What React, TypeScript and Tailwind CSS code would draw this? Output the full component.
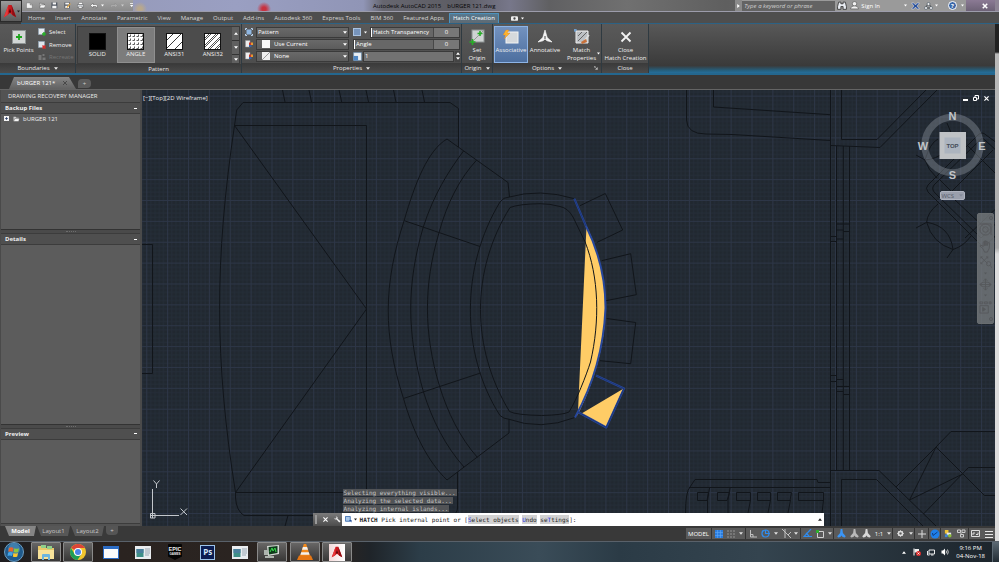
import { useState } from 'react';
import type { ReactNode } from 'react';

const ribbonTabs = [
  'Home', 'Insert', 'Annotate', 'Parametric', 'View', 'Manage', 'Output', 'Add-ins',
  'Autodesk 360', 'Express Tools', 'BIM 360', 'Featured Apps', 'Hatch Creation',
];

const patterns = ['SOLID', 'ANGLE', 'ANSI31', 'ANSI32'] as const;

function Caret({ className = '' }: { className?: string }) {
  return (
    <svg viewBox="0 0 6 4" className={`w-1 h-[3px] shrink-0 ${className}`} fill="currentColor" aria-hidden="true">
      <path d="M0 0h6L3 4z" />
    </svg>
  );
}

function LogoA({ className }: { className: string }) {
  return (
    <svg viewBox="0 0 16 16" className={className} aria-hidden="true">
      <path d="M6.2 1h3.6L15 15l-4.3-2.4L8 10.4l-2.700 2.200L1 15z" fill="#c9191e" />
      <path d="M6.200 1L5.300 12.600 1 15z" fill="#e8383a" />
      <path d="M9.800 1L15 15l-4.300-2.400z" fill="#8f0d12" />
      <path d="M8 5.200l1.500 4-1.500 1.200-1.500-1.200z" fill="#5d0609" />
    </svg>
  );
}

/* ---------- title bar ---------- */

function QuickAccess() {
  return (
    <div className="flex h-full w-28 shrink-0 items-center gap-[6px] bg-gradient-to-b from-[#a2a2a2] to-[#8b8b8b] pl-[5px] text-white">
      <button aria-label="New" className="h-2 w-2">
        <svg viewBox="0 0 16 16"><path d="M1 2h9l5 5v8H1z" fill="#f4f4f4" stroke="#555" /><path d="M10 2v5h5" fill="#bbb" stroke="#555" /></svg>
      </button>
      <button aria-label="Open" className="h-2 w-2">
        <svg viewBox="0 0 16 16"><path d="M1 14V3h5l2 2h5v3" fill="#ddd" stroke="#444" /><path d="M1 14l3-7h12l-3 7z" fill="#f7f7f7" stroke="#444" /></svg>
      </button>
      <button aria-label="Save" className="h-2 w-2">
        <svg viewBox="0 0 16 16"><path d="M1 1h14v14H1z" fill="#4e5560" /><path d="M4 1h8v5H4zM3 9h10v6H3z" fill="#f5f5f5" /></svg>
      </button>
      <button aria-label="Save as" className="h-2 w-2">
        <svg viewBox="0 0 16 16"><path d="M1 1h13v14H1z" fill="#4e5560" /><path d="M3 2h9v4H3zM3 9h9v5H3z" fill="#f5f5f5" /><path d="M7 11l7-8 2 2-7 8-3 1z" fill="#e0a33a" /></svg>
      </button>
      <button aria-label="Plot" className="h-2 w-2">
        <svg viewBox="0 0 16 16"><path d="M4 1h9v5H4z" fill="#fff" stroke="#555" /><path d="M1 6h14v7H1z" fill="#dfe3e8" stroke="#444" /><path d="M4 10h8v5H4z" fill="#fff" stroke="#444" /></svg>
      </button>
      <button aria-label="Undo" className="flex h-2 items-center gap-[3px]">
        <svg viewBox="0 0 16 16" className="h-2 w-2"><path d="M6 2L1 7l5 5V9h5c2 0 2 2 1 4 4-3 4-8-1-8H6z" fill="#f5f5f5" stroke="#555" /></svg>
        <Caret className="w-[3px]" />
      </button>
      <button aria-label="Redo" className="flex h-2 items-center gap-[3px] text-[#ccc]">
        <svg viewBox="0 0 16 16" className="h-2 w-2"><path d="M10 2l5 5-5 5V9H5c-2 0-2 2-1 4-4-3-4-8 1-8h5z" fill="#aaa" stroke="#8a8a8a" /></svg>
        <Caret className="w-[3px]" />
      </button>
      <button aria-label="Customize toolbar" className="h-2 w-1">
        <svg viewBox="0 0 8 16"><path d="M0 3h8v2H0zM0 7h8l-4 5z" fill="#fff" /></svg>
      </button>
    </div>
  );
}

function TitleBar() {
  return (
    <div className="flex h-3 items-stretch overflow-hidden border-b border-[#9c9cab] bg-[radial-gradient(circle_at_243px_9px,#c8323f_2px,#c8323f00_7px),radial-gradient(circle_at_119px_9px,#b9a88c_2px,#b9a88c00_7px),linear-gradient(90deg,#9397b4_0%,#9a9fc2_22%,#9095b6_35%,#66666f_37%,#5c5c63_45%,#77778a_50%,#606062_54%,#707070_62%,#5f5f5f_72%,#707070_100%)]">
      <QuickAccess />
      <div className="flex-1 basis-0" />
      <div className="flex shrink-0 items-center gap-[6px] whitespace-pre text-[#060607]">
        <span>Autodesk AutoCAD 2015</span>
        <span>bURGER 121.dwg</span>
      </div>
      <div className="flex-1 basis-0" />
      <div className="flex shrink-0 items-center bg-[#9a9a9a] text-white">
        <button aria-label="Collapse search" className="flex h-full w-[7px] items-center justify-center bg-[#8a8a8a]">
          <svg viewBox="0 0 4 6" className="h-1 w-[3px]"><path d="M0 0l4 3-4 3z" fill="#fff" /></svg>
        </button>
        <input
          aria-label="Search"
          placeholder="Type a keyword or phrase"
          className="h-[10px] w-[93px] bg-[#636363] px-[2px] italic text-white outline-none placeholder:text-[#d0d0d0]"
        />
        <button aria-label="Find" className="ml-[2px] h-[9px] w-[10px]">
          <svg viewBox="0 0 18 16"><path d="M3 2h4v3h4V2h4l2 8v5h-6v-5H7v5H1v-5z" fill="#e8ecf2" stroke="#333" strokeWidth="1.500" /></svg>
        </button>
        <button className="ml-[3px] flex items-center gap-[2px]">
          <svg viewBox="0 0 16 16" className="h-[9px] w-[9px]"><circle cx="8" cy="5" r="4" fill="#f2f2f2" stroke="#444" /><path d="M1 14c0-4 4-5 7-5s7 1 7 5z" fill="#f2f2f2" stroke="#444" /></svg>
          Sign In
        </button>
        <Caret className="ml-6 w-[3px]" />
        <button aria-label="Exchange" className="ml-1 h-2 w-[9px]">
          <svg viewBox="0 0 18 16"><path d="M1 2h5l3 4 3-4h5l-5 6 5 6h-5l-3-4-3 4H1l5-6z" fill="#254f9c" stroke="#e4e4ee" /></svg>
        </button>
        <button aria-label="Stay connected" className="ml-1 flex items-center gap-[2px]">
          <svg viewBox="0 0 18 16" className="h-2 w-[9px]"><path d="M9 2l6 10H3z" fill="none" stroke="#444" strokeWidth="2" /><circle cx="9" cy="4" r="3" fill="#eee" stroke="#345" /><circle cx="4" cy="12" r="3" fill="#eee" stroke="#345" /><circle cx="14" cy="12" r="3" fill="#eee" stroke="#345" /></svg>
          <Caret className="w-[3px]" />
        </button>
        <button aria-label="Help" className="ml-[10px] flex items-center gap-1 pr-[2px]">
          <span className="flex h-[9px] w-[9px] items-center justify-center rounded-full border border-white bg-[#3b67a8] font-bold leading-none">?</span>
          <Caret className="w-[3px]" />
        </button>
      </div>
      <button aria-label="Close window" className="flex w-[29px] shrink-0 items-center justify-center bg-gradient-to-b from-[#8b7a94] to-[#6d6276] pl-2">
        <svg viewBox="0 0 8 8" className="h-[6px] w-[6px]"><path d="M1 1l6 6M7 1L1 7" stroke="#fff" strokeWidth="2" /></svg>
      </button>
      <div className="w-1 bg-[#8d8494]" />
    </div>
  );
}

function RibbonTabs() {
  const [active, setActive] = useState('Hatch Creation');
  return (
    <div role="tablist" className="flex h-3 items-end border-b border-[#2c6285] bg-[#4e4e4e] pl-[2px]">
      {ribbonTabs.map((t) => (
        <button
          key={t}
          role="tab"
          aria-selected={t === active}
          onClick={() => setActive(t)}
          className={`h-[10px] whitespace-nowrap leading-[9px] ${
            t === active
              ? 'rounded-t-[1px] border-x border-t border-[#4d92bd] bg-gradient-to-b from-[#56788f] to-[#5f6a72] px-[3px] text-white'
              : 'px-[5px] text-[#d8d8d8]'
          }`}
        >
          {t}
        </button>
      ))}
      <button aria-label="Ribbon display" className="ml-3 flex h-[10px] items-center gap-[3px] text-white">
        <svg viewBox="0 0 12 8" className="h-[5px] w-[7px]"><rect width="12" height="8" rx="2" fill="#eee" /><circle cx="6" cy="4" r="2" fill="#444" /></svg>
        <Caret className="w-[3px]" />
      </button>
    </div>
  );
}

/* ---------- ribbon ---------- */

function Panel({ title, caret, launcher, className, children }: {
  title: string; caret?: boolean; launcher?: boolean; className: string; children: ReactNode;
}) {
  return (
    <section className={`flex shrink-0 flex-col border-r border-[#2f3a41] bg-gradient-to-b from-[#595959] to-[#4a4a4a] ${className}`}>
      <div className="flex flex-1 items-start px-px pt-[2px]">{children}</div>
      <div className="relative flex h-[10px] items-center justify-center gap-1 bg-gradient-to-b from-[#3a3a3a] to-[#4b4b4b] text-[#e8e8e8]">
        {title}
        {caret && <Caret />}
        {launcher && (
          <svg viewBox="0 0 6 6" className="absolute right-[3px] h-1 w-1"><path d="M0 0h3M0 0v3M2 2l3 3M5 2v3H2" stroke="#ddd" fill="none" /></svg>
        )}
      </div>
    </section>
  );
}

function Swatch({ kind }: { kind: (typeof patterns)[number] }) {
  return (
    <svg viewBox="0 0 17 17" className="h-[17px] w-[17px]" aria-hidden="true">
      <rect width="17" height="17" fill={kind === 'SOLID' ? '#000' : '#fff'} />
      {kind === 'ANGLE' && (
        <path
          d="M1.500 3.500h2v-2M5.500 3.500h2v-2M9.500 3.500h2v-2M13.500 3.500h2v-2M1.500 7.500h2v-2M5.500 7.500h2v-2M9.500 7.500h2v-2M13.500 7.500h2v-2M1.500 11.500h2v-2M5.500 11.500h2v-2M9.500 11.500h2v-2M13.500 11.500h2v-2M1.500 15.500h2v-2M5.500 15.500h2v-2M9.500 15.500h2v-2M13.500 15.500h2v-2"
          stroke="#333" strokeWidth=".8" fill="none"
        />
      )}
      {kind === 'ANSI31' && <path d="M0 8L8 0M0 16L16 0M8 17l9-9" stroke="#222" strokeWidth=".9" />}
      {kind === 'ANSI32' && <path d="M0 6l6-6M0 8l8-8M0 13L13 0M0 15L15 0M3 17L17 3M5 17L17 5M10 17l7-7M12 17l5-5" stroke="#222" strokeWidth=".8" />}
      <rect x=".5" y=".5" width="16" height="16" fill="none" stroke="#111" />
    </svg>
  );
}

function BigButton({ label, icon, active, className }: { label: string[]; icon: ReactNode; active?: boolean; className: string }) {
  return (
    <button
      className={`flex h-[37px] shrink-0 flex-col items-center pt-[2px] leading-[8px] text-[#f0f0f0] ${className} ${
        active ? 'border border-[#8db4e6] bg-gradient-to-b from-[#7392bf] to-[#4d6f9f]' : 'border border-transparent'
      }`}
    >
      <span className="mb-px flex h-4 items-center">{icon}</span>
      {label.map((l) => <span key={l} className="whitespace-nowrap">{l}</span>)}
    </button>
  );
}

function SmallIcon({ color }: { color: string }) {
  return (
    <svg viewBox="0 0 16 16" className="h-2 w-2 shrink-0" aria-hidden="true">
      <rect x="1" y="1" width="12" height="12" fill="#dfe5ec" stroke="#8fa7bd" />
      <path d="M9 9l6 6M15 9l-6 6" stroke={color} strokeWidth="3" />
    </svg>
  );
}

function Boundaries() {
  return (
    <Panel title="Boundaries" caret className="w-[76px]">
      <BigButton
        className="w-[35px]"
        label={['Pick Points']}
        icon={
          <svg viewBox="0 0 14 14" className="h-[14px] w-[14px]"><rect x=".5" y=".5" width="13" height="13" fill="#d3d7d6" stroke="#8e9494" /><path d="M7 4v6M4 7h6" stroke="#1ca51c" strokeWidth="1.800" /></svg>
        }
      />
      <div className="flex flex-col pl-[2px] text-[#f0f0f0]">
        <button className="flex h-3 items-center gap-[3px]">
          <svg viewBox="0 0 16 16" className="h-2 w-2"><rect x="1" y="1" width="12" height="12" fill="#e6ebf0" stroke="#8fa7bd" /><path d="M12 8v8M8 12h8" stroke="#27ad27" strokeWidth="3" /></svg>
          Select
        </button>
        <button className="flex h-[13px] items-center gap-[3px]"><SmallIcon color="#dd2b2b" />Remove</button>
        <button disabled className="flex h-3 items-center gap-[3px] text-[#757575]">
          <svg viewBox="0 0 16 16" className="h-2 w-2"><path d="M1 4h6v10H1zM9 2h4v4H9zM9 9h6v5H9z" fill="#777" /></svg>
          Recreate
        </button>
      </div>
    </Panel>
  );
}

function PatternPanel() {
  const [selected, setSelected] = useState<string>('ANGLE');
  return (
    <Panel title="Pattern" className="w-[166px]">
      <div className="flex flex-1 border border-[#3b3b3b] bg-[#4c4c4c]">
        {patterns.map((p) => (
          <button
            key={p}
            onClick={() => setSelected(p)}
            className={`flex h-9 flex-1 flex-col items-center border pt-[5px] leading-[8px] text-[#f0f0f0] ${
              p === selected ? 'border-[#8f8f8f] bg-[#7c7c7c]' : 'border-transparent'
            }`}
          >
            <Swatch kind={p} />
            {p}
          </button>
        ))}
        <div className="flex w-[7px] flex-col gap-px bg-[#333]">
          {['Scroll up', 'Scroll down', 'More patterns'].map((l, i) => (
            <button key={l} aria-label={l} className={`flex items-center justify-center bg-[#606060] text-white ${i === 2 ? 'h-2' : 'flex-1'}`}>
              <Caret className={i === 0 ? 'rotate-180' : ''} />
            </button>
          ))}
        </div>
      </div>
    </Panel>
  );
}

function PropSelect({ label, value, swatch, icon }: { label: string; value: string; swatch?: ReactNode; icon: ReactNode }) {
  return (
    <div className="flex h-3 items-center gap-[3px]">
      {icon}
      <span className="relative flex h-[11px] flex-1 items-center bg-gradient-to-b from-[#6b6b6b] to-[#5a5a5a] pl-[2px] text-white outline outline-1 -outline-offset-1 outline-[#3a3a3a]">
        {swatch}
        <select aria-label={label} className="h-[11px] w-full appearance-none bg-transparent leading-[11px] outline-none" defaultValue={value}>
          <option>{value}</option>
        </select>
        <Caret className="pointer-events-none absolute right-[2px]" />
      </span>
    </div>
  );
}

function NumberSlider({ label, id }: { label: string; id: string }) {
  return (
    <div className="flex h-[11px] flex-1 items-stretch border border-[#3a3a3a] bg-[#676767] leading-[9px] text-white">
      <label htmlFor={id} className="flex-1 whitespace-nowrap border-l border-white pl-px">{label}</label>
      <input id={id} defaultValue="0" className="w-[26px] border-l border-[#484848] bg-[#777] text-center outline-none" />
    </div>
  );
}

function ColorIcon() {
  return (
    <svg viewBox="0 0 16 16" className="h-2 w-2 shrink-0" aria-hidden="true">
      <path d="M1 1h9v13H1z" fill="#eee" stroke="#999" /><path d="M8 5h4v5H8z" fill="#c8362b" /><path d="M12 5h4v5h-4z" fill="#e59a32" /><path d="M8 10h5v4H8z" fill="#3463a8" />
    </svg>
  );
}

function Properties() {
  return (
    <Panel title="Properties" caret className="w-[220px]">
      <div className="flex w-[106px] flex-col pl-[2px]">
        <PropSelect
          label="Hatch type"
          value="Pattern"
          icon={<svg viewBox="0 0 16 16" className="h-2 w-2 shrink-0"><rect x="3" y="3" width="10" height="10" fill="#8fb6e0" /><path d="M1 1h3M1 1v3M15 1h-3M15 1v3M1 15h3M1 15v-3M15 15h-3M15 15v-3" stroke="#bcd5ef" strokeWidth="2" /></svg>}
        />
        <PropSelect label="Hatch color" value="Use Current" icon={<ColorIcon />} swatch={<span className="mx-1 h-2 w-2 shrink-0 bg-[#f7f7f7]" />} />
        <PropSelect
          label="Background color"
          value="None"
          icon={<ColorIcon />}
          swatch={<svg viewBox="0 0 8 8" className="mx-1 h-2 w-2 shrink-0"><path d="M0 0h8v8H0z" fill="#eee" /><path d="M0 8l8-8" stroke="#999" /></svg>}
        />
      </div>
      <div className="ml-1 flex flex-1 flex-col">
        <div className="flex h-3 items-center gap-[3px]">
          <svg viewBox="0 0 8 8" className="h-2 w-2 shrink-0"><rect x=".5" y=".5" width="7" height="7" fill="#7794bb" stroke="#a9c2e0" /></svg>
          <Caret className="w-[3px] text-white" />
          <NumberSlider id="transparency" label="Hatch Transparency" />
        </div>
        <div className="flex h-3 items-center"><NumberSlider id="angle" label="Angle" /></div>
        <div className="flex h-3 items-center gap-px">
          <svg viewBox="0 0 16 16" className="h-[9px] w-[9px] shrink-0"><path d="M1 1h14v14H1z" fill="#e9eef4" stroke="#6890ba" /><path d="M1 7h8v8H1z" fill="#4f87c4" /></svg>
          <input aria-label="Hatch pattern scale" defaultValue="1" className="h-[11px] min-w-0 flex-1 border border-[#3a3a3a] bg-[#727272] px-px text-white outline-none" />
          <span className="flex h-[11px] w-[5px] flex-col items-center justify-around bg-[#444] text-white">
            <Caret className="rotate-180" /><Caret />
          </span>
        </div>
      </div>
    </Panel>
  );
}

function Ribbon() {
  return (
    <div className="flex h-[51px] border-b-2 border-[#24678f] bg-[linear-gradient(180deg,#585858_0%,#3a3a3a_85%,#25607f_95%,#256e9b_100%)]">
      <Boundaries />
      <PatternPanel />
      <Properties />
      <Panel title="Origin" caret className="w-[31px]">
        <BigButton
          className="w-7"
          label={['Set', 'Origin']}
          icon={<svg viewBox="0 0 16 16" className="h-4 w-4"><rect x="3" y="1" width="12" height="12" fill="#cfd3d3" stroke="#8e9494" /><path d="M3 13L15 1" stroke="#999" /><path d="M11 2v5M8.500 4.500h5M3.500 10v6M.5 13h6" stroke="#25ad25" strokeWidth="1.600" /></svg>}
        />
      </Panel>
      <Panel title="Options" caret launcher className="w-[109px]">
        <BigButton
          active
          className="w-[34px]"
          label={['Associative']}
          icon={<svg viewBox="0 0 16 16" className="h-4 w-4"><rect x="3" y="3" width="12" height="11" fill="#d6d9dc" stroke="#f3f3f3" /><path d="M3 1L0 6h3L1 10l6-6H4l2-3z" fill="#ffb52a" stroke="#d9822b" strokeWidth=".4" /></svg>}
        />
        <BigButton
          className="w-[34px]"
          label={['Annotative']}
          icon={<svg viewBox="0 0 16 16" className="h-4 w-4"><path d="M8 1l2.200 7.500L15 13l-5-1.200L8 10l-2 1.800L1 13l4.800-4.500z" fill="#f3f3f3" stroke="#fff" strokeWidth=".6" /><path d="M8 7v3" stroke="#444" /></svg>}
        />
        <div className="relative">
          <BigButton
            className="w-[39px]"
            label={['Match', 'Properties']}
            icon={<svg viewBox="0 0 16 16" className="h-4 w-4"><path d="M2 2h12v12H2z" fill="#bcc0c4" stroke="#eee" /><path d="M4 12L13 3M4 7l4-4" stroke="#666" /><path d="M0 1h3M1 0v3" stroke="#7bb4ee" /><path d="M15 6l-4 5" stroke="#ddd" strokeWidth="1.500" /><path d="M12 10l-5 3 1 2 5-2z" fill="#c8713a" /></svg>}
          />
          <Caret className="absolute bottom-2 right-px w-[3px] text-white" />
        </div>
      </Panel>
      <Panel title="Close" className="w-[47px]">
        <BigButton
          className="w-[45px]"
          label={['Close', 'Hatch Creation']}
          icon={<svg viewBox="0 0 12 12" className="h-3 w-3"><path d="M1.500 1.500l9 9M10.500 1.500l-9 9" stroke="#f2f2f2" strokeWidth="1.800" /></svg>}
        />
      </Panel>
    </div>
  );
}

function FileTabs() {
  return (
    <div className="flex h-[15px] shrink-0 items-end border-b border-[#646464] bg-[#383838] pl-[9px]">
      <button className="flex h-3 w-[67px] items-center justify-between bg-gradient-to-b from-[#858585] to-[#626262] px-2 text-white [clip-path:polygon(0_100%,5px_0,60px_0,100%_100%)]">
        bURGER 121*
        <svg viewBox="0 0 6 6" className="mr-px h-1 w-1"><path d="M0 0l6 6M6 0L0 6" stroke="#333" /></svg>
      </button>
      <button aria-label="New tab" className="mb-px ml-[2px] flex h-[9px] w-[13px] items-center justify-center rounded-t-[4px] rounded-br-[4px] bg-[#5b5b5b] text-[#ccc]">+</button>
    </div>
  );
}

/* ---------- left palette ---------- */

function PaletteSection({ title, className = '', children }: { title: string; className?: string; children?: ReactNode }) {
  return (
    <section className={`flex flex-col ${className}`}>
      <h2 className="flex h-3 shrink-0 items-center justify-between border-y border-[#3c3c3c] bg-[#4f4f4f] pl-1 pr-[3px] font-bold text-[#f0f0f0]">
        {title}
        <span className="h-px w-[3px] bg-white" />
      </h2>
      <div className="flex-1 bg-[#5c5c5c]">{children}</div>
    </section>
  );
}

function Splitter() {
  return (
    <div className="flex h-1 shrink-0 items-center justify-center border-t border-[#333] bg-[#4a4a4a]">
      <span className="w-[10px] border-t border-dotted border-[#6d6d6d]" />
    </div>
  );
}

function RecoveryManager() {
  return (
    <aside className="flex w-[142px] shrink-0 flex-col border-l border-r-2 border-[#4a4a4a] bg-[#535353]">
      <h1 className="h-3 shrink-0 pl-[7px] leading-[13px] text-[#e8e8e8]">DRAWING RECOVERY MANAGER</h1>
      <PaletteSection title="Backup Files" className="h-[127px] shrink-0">
        <button className="flex h-2 items-center pl-[3px] pt-px text-[#ededed]">
          <svg viewBox="0 0 10 10" className="mr-1 h-[5px] w-[5px]"><path d="M0 0h10v10H0z" fill="#f3f3f3" /><path d="M5 2v6M2 5h6" stroke="#1d2f5c" strokeWidth="1.400" /></svg>
          <svg viewBox="0 0 16 14" className="mr-[3px] h-[6px] w-[7px]"><path d="M1 12V2h5l2 2h5v3" fill="#ccc" /><path d="M1 13l3-7h11l-2 7z" fill="#f5f5f5" stroke="#444" /></svg>
          bURGER 121
        </button>
      </PaletteSection>
      <Splitter />
      <PaletteSection title="Details" className="flex-[2]" />
      <Splitter />
      <PaletteSection title="Preview" className="flex-1" />
      <div className="h-[3px] border-t border-[#3c3c3c]" />
    </aside>
  );
}

/* ---------- drawing area ---------- */

const wallDetails =
  'M836.5 224H849.5M836.5 230H843.3M843.3 231.500H849.5M830.5 236.500H836.5M830.5 241.500H836.5M836.5 239H843.3M830.5 375.500H836.5M830.5 381.500H836.5M836.5 379.500H843.3M836.5 386.500H849.5M836.5 391.500H843.3M843.3 394.500H849.5';

function Drawing() {
  return (
    <svg className="absolute inset-0 h-full w-full" aria-label="Model space drawing">
      <defs>
        <pattern id="grid" width="20.870" height="20.870" patternUnits="userSpaceOnUse" x="188" y="200">
          <path d="M4.700 0V21M8.850 0V21M13 0V21M17.200 0V21M0 4.700H21M0 8.850H21M0 13H21M0 17.200H21" stroke="#252d38" strokeWidth=".9" />
          <path d="M.5 0V21M0 .5H21" stroke="#2d3647" />
        </pattern>
      </defs>
      <g transform="translate(-142 -90)">
        <rect x="141" y="90" width="2400" height="1600" fill="url(#grid)" />

        {/* selected hatch area */}
        <path d="M586.500 226C600 253 605.500 282 605.500 308C605.500 343 594 384 577 416L578 411.500z" fill="#ffcc66" />
        <path d="M581.500 413.500L623.300 388.700L606 426.700z" fill="#ffcc66" />

        <g fill="none" stroke="#11151a" strokeWidth="1">
          {/* desk */}
          <path d="M458.500 147V108.500L450 102.500H243L236.700 110L234.500 125.500C214.500 260 214.500 360 235.500 492.500V498Q236.500 511 244 515.500H452Q457.500 513 457.500 508V472" />
          <path d="M234.500 125.500H366.500V492.500H235.500M234.500 125.500L366.500 309L235.500 492.500" />
          <path d="M282.500 90L285 102M309 90L311.500 102M339 90L341.700 102M366 90L368.500 102M393.500 90L396 102M422 90L424.500 102M288 515.500L285 526" />
          <path d="M141 244.500H152.500V373.500H141" />

          {/* curved sofa */}
          <path d="M447 139C428 150 415 183 404.300 220C383 285 383 335 403.500 398.500C413 432 428 462 447 480L509 433V419M447 139L508 182.500L509.500 197" />
          <path d="M463.500 151C448 172 434 194 423.300 227C406.500 284 406.500 334 423.500 392C432 420 446 447 464 467" />
          <path d="M476.700 160C460 178 447 203 439 232.700C423.500 285 423.500 333 439.500 386C447 411 460 438 477.500 457.500" />
          <path d="M404.300 220.700L480 246.500M403.500 398.500L480.500 373" />

          {/* table */}
          <path d="M574.300 198.700Q540 188 508 197.300Q504 197 500 202C461 266 460 353 500 415.500Q504 419 508 419Q541 431 574.300 417.700" />
          <path d="M540 203.700Q519 204 510 207.500C470.500 271 471 348 509.500 411.500Q516 415 541.700 415.500Q563 415 569 412C577 399 586 376 590.500 362C600 321 599 277 585 241.700L573 217Q568 208 560 206.500Q550 203.700 540 203.700z" />

          {/* stools */}
          <path d="M580 205.700L605.300 193.500L622.700 230L596.700 242.500M601.700 260.700L630.700 253.700L636.300 294.700L606 300.700M606.700 318.500L635.700 322.500L630.700 363.700L600 360.700" />

          {/* wall and window */}
          <path d="M686.500 90V120Q687 134 706 134L732 134.500L830.500 140.500M713.500 90V107L830.500 114.700" />
          <path d="M830.500 90V526M841.500 90V139.500H877L926 90M830.500 145.500L880 147.500L937 90" />
          <path d="M836.500 146V470.500M843.300 146V470.500M849.500 146V470.500" />
          <path d={wallDetails} />
          <path d="M830.500 470.500H879L936 526M841.500 526V479.500H876.500L923 526" />

          {/* counter */}
          <path d="M685.500 513Q685.500 492 690 487L695 479.500H817L818 482.500H830.500M689 487.500H830.500" />
          <path d="M697.500 492.500H708.500L707 500.500H697.500zM717.500 492.500H729.500L727 500.500H717.500zM736.500 492.500H750.500V500.500H736.500zM757.500 492.500H770.500V500.500H757.500zM777.500 492.500H791.500L790 500.500H777.500zM798.500 492.500H823.500V500.500H798.500z" />
          <path d="M709.500 488L707.500 500V513M730 488L728 500V513M750.500 500L748 513M770.500 500L768 513M790.500 500L788 513M823.500 500L822 513" />

          {/* lower right furniture */}
          <path d="M896 487L936 447L951 431.500H1600M936 447L984.500 495.500H1600M936 447L909.500 500L962.700 474M923.500 514L968.500 467.500H1600" />

          {/* upper right furniture */}
          <path d="M1012 154L986 135Q982 131 978 135L928 185Q925 188 928 192L980 244Q983 248 987 244L1012 220" />
          <path d="M1012 165L985 140Q982 137 979 141L934 185Q931 189 935 193L981 238L1012 208" />
          <path d="M940 180L951.500 191.500L993 150M955 200L1000 242M968 146L1006 184M1002 203L965 238" />
          <path d="M938 204Q927 213 926.700 222.300Q932 243 953 249.500Q950 226 926.700 222.300L916 228M953 249.500L947 258M953 249.500Q964 246 971 236" />
          <path d="M916 155L925 160Q930 143 938 139M925 160Q928 170 937 178M925 160Q948 158 952 135L947 123" />
        </g>

        {/* selected edges */}
        <g fill="none" strokeLinejoin="round">
          <path d="M574.300 198.700L586 226Q605.500 265 605.500 308Q603 367 575 417.500" stroke="#27479c" strokeWidth="2" />
          <path d="M596 375.500L624 388.500L606.300 427.500L578 412" stroke="#27479c" strokeWidth="2" />
          <path d="M574.300 198.700L586 226M596 375.500L624 388.500L606.300 427.500L578 412" stroke="#172b60" strokeWidth=".6" />
        </g>

        {/* UCS icon */}
        <path d="M152.500 489V518M150 515.500H179M150.500 513.500h4.500v4.500h-4.500z" fill="none" stroke="#c3c7cc" />
        <path d="M153.500 480.500L156.500 484L159.500 480.500M156.500 484V488M180.500 508.500L187 515M187 508.500L180.500 515" fill="none" stroke="#c3c7cc" />
      </g>
    </svg>
  );
}

function ViewCube() {
  return (
    <div className="absolute right-[7px] top-[18px] flex w-[72px] flex-col items-center gap-[7px]">
      <svg viewBox="0 0 72 76" className="h-[76px] w-[72px]" fontFamily="'Liberation Sans', sans-serif" fontWeight="bold" textAnchor="middle">
        <circle cx="36.500" cy="37" r="27.700" fill="none" stroke="#8d949e" strokeOpacity=".42" strokeWidth="7" />
        <rect x="23.500" y="24" width="26.500" height="27" fill="#bfc2c5" />
        <rect x="28.500" y="29.500" width="16" height="16" fill="#acb4bf" />
        <text x="36.500" y="39.500" fontSize="6" fill="#454c57">TOP</text>
        <g fontSize="11" fill="#c2c5c9">
          <text x="36.500" y="12">N</text>
          <text x="36.500" y="71">S</text>
          <text x="7" y="41.500">W</text>
          <text x="66" y="41.500">E</text>
        </g>
      </svg>
      <button className="flex h-[9px] w-[25px] items-center justify-between rounded-[2px] border border-[#aeb3bf] bg-[#9a9fac] px-px leading-none text-[#555c6a]">
        WCS
        <Caret className="text-[#858b9a]" />
      </button>
    </div>
  );
}

function NavBar() {
  return (
    <div className="absolute right-px top-[123px] flex h-[111px] w-[17px] flex-col items-center justify-between rounded-[2px] border border-[#696d70] bg-[#7b7f82]/75 py-[2px] text-[#56595c]">
      <svg viewBox="0 0 4 4" className="h-1 w-1 self-end"><circle cx="2" cy="2" r="1.500" fill="none" stroke="currentColor" /></svg>
      <button aria-label="Full navigation wheel"><svg viewBox="0 0 14 14" className="h-[13px] w-[13px]" fill="none" stroke="currentColor"><circle cx="7" cy="7" r="6" /><circle cx="7" cy="7" r="3" /><path d="M1 1h12v12" /></svg></button>
      <button aria-label="Pan"><svg viewBox="0 0 14 14" className="h-[13px] w-[13px]" fill="none" stroke="currentColor"><path d="M4 9L1 6.500 2 5.500 4.500 7V2h1.500v4V1h1.500v5V1.500H9V6l1-3.500 1.500.5L11 9l-2 4H6z" /></svg></button>
      <button aria-label="Zoom"><svg viewBox="0 0 14 14" className="h-3 w-3" fill="none" stroke="currentColor"><path d="M1 1l8 8M9 1L1 9M1 3V1h2M7 1h2v2M1 7v2h2" /><circle cx="10" cy="9" r="2.500" /><path d="M12 11l2 3" /></svg></button>
      <Caret className="w-[3px]" />
      <button aria-label="Orbit"><svg viewBox="0 0 14 14" className="h-[13px] w-[13px]" fill="none" stroke="currentColor"><path d="M7 1v12M5 3l2-2 2 2M5 11l2 2 2-2M1 7h12M3 5L1 7l2 2M11 5l2 2-2 2" /><ellipse cx="7" cy="7" rx="5" ry="2.500" /></svg></button>
      <Caret className="w-[3px]" />
      <button aria-label="Show motion"><svg viewBox="0 0 14 14" className="h-[13px] w-[13px]" fill="none" stroke="currentColor"><path d="M1 1h3v2H1zM6 1h3v2H6zM11 1h2v2h-2zM1 5h9v8H1z" /><path d="M4 7l3 2-3 2z" fill="currentColor" /></svg></button>
      <svg viewBox="0 0 4 4" className="h-1 w-1 self-end"><circle cx="2" cy="2" r="1.500" fill="none" stroke="currentColor" /></svg>
    </div>
  );
}

function CommandLine() {
  return (
    <div className="absolute inset-x-1/5 bottom-0 font-['DejaVu_Sans_Mono','Liberation_Mono',monospace]">
      <div className="flex flex-col items-start gap-px pl-[30px] text-[#c4c4c4]">
        {['Selecting everything visible...', 'Analyzing the selected data...', 'Analyzing internal islands...'].map((l) => (
          <span key={l} className="bg-[#515356] px-px leading-[7px] last:mb-px">{l}</span>
        ))}
      </div>
      <div className="flex h-[13px] items-stretch bg-white text-[#222]">
        <div className="flex w-[29px] items-center gap-[6px] bg-gradient-to-b from-[#7b7b7b] to-[#4c4c4c] pl-[2px]">
          <span className="h-[9px] w-[2px] bg-[#999]" />
          <button aria-label="Close command line"><svg viewBox="0 0 6 6" className="h-[5px] w-[5px]"><path d="M.5.5l5 5M5.500.5l-5 5" stroke="#fff" strokeWidth="1.300" /></svg></button>
          <button aria-label="Customize"><svg viewBox="0 0 16 16" className="h-[7px] w-[7px]"><path d="M1 4a4 4 0 0 0 5 4l6 7 3-3-7-6a4 4 0 0 0-4-5l2 3-2 2z" fill="#f2f2f2" /></svg></button>
        </div>
        <div className="flex flex-1 items-center pl-[3px]">
          <svg viewBox="0 0 16 16" className="mr-[2px] h-[7px] w-[7px]"><path d="M1 1h11v11H1z" fill="#a9c8ea" stroke="#3c6db0" strokeWidth="2" /><path d="M9 9h6v6z" fill="#27519a" /></svg>
          <Caret className="mr-[3px] w-[3px]" />
          <p className="whitespace-nowrap leading-[9px]">
            <b>HATCH</b> Pick internal point or [
            <button className="bg-[#d2d2d2]"><span className="text-[#2a32e0]">S</span>elect objects</button>{' '}
            <button className="bg-[#d2d2d2]"><span className="text-[#2a32e0]">U</span>ndo</button>{' '}
            <button className="bg-[#d2d2d2]">se<span className="text-[#2a32e0]">T</span>tings</button>]:
          </p>
        </div>
        <button aria-label="Command history" className="pr-[2px]"><Caret className="rotate-180" /></button>
      </div>
    </div>
  );
}

function Viewport() {
  return (
    <main className="relative min-w-0 flex-1 overflow-hidden bg-[#212830]">
      <Drawing />
      <div className="relative flex items-center justify-between pl-px pr-[6px] pt-1 leading-[8px] text-[#ededed]">
        <span>[−][Top][2D Wireframe]</span>
        <div className="flex items-center gap-[5px]">
          <button aria-label="Minimize" className="mt-[3px] h-[2px] w-[5px] bg-white" />
          <button aria-label="Restore"><svg viewBox="0 0 6 6" className="h-[6px] w-[6px]"><path d="M.5 2.500h3v3h-3zM2 2V.5h3.500V4H4" fill="none" stroke="#fff" /></svg></button>
          <button aria-label="Close drawing"><svg viewBox="0 0 6 6" className="h-[5px] w-[5px]"><path d="M.5.5l5 5M5.500.5l-5 5" stroke="#fff" strokeWidth="1.400" /></svg></button>
        </div>
      </div>
      <ViewCube />
      <NavBar />
      <CommandLine />
    </main>
  );
}

/* ---------- status bar ---------- */

function StatusCell({ label, className, children }: { label: string; className: string; children: ReactNode }) {
  return <button aria-label={label} className={`flex h-[11px] shrink-0 items-center justify-center ${className}`}>{children}</button>;
}

function PersonIcon({ className }: { className: string }) {
  return (
    <svg viewBox="0 0 16 16" className={`h-[9px] w-[9px] ${className}`}><path d="M6.500 0h3l1 7 5 6-1.500 2-4-1-2-2.500L6 14l-4 1-1.500-2 5-6z" fill="currentColor" /></svg>
  );
}

function StatusBar() {
  const [layout, setLayout] = useState('Model');
  return (
    <footer className="flex h-[15px] shrink-0 items-start bg-[#393939]">
      <div role="tablist" className="flex flex-1 items-start pl-[5px]">
        {['Model', 'Layout1', 'Layout2'].map((l) => (
          <button
            key={l}
            role="tab"
            aria-selected={l === layout}
            onClick={() => setLayout(l)}
            className={`h-[10px] leading-[10px] [clip-path:polygon(0_0,100%_0,calc(100%-2px)_100%,4px_100%)] ${
              l === layout ? 'w-[31px] bg-[#858585] font-bold text-white' : 'ml-px w-[33px] bg-[#575757] text-[#c8c8c8]'
            }`}
          >
            {l}
          </button>
        ))}
        <button aria-label="New layout" className="ml-[2px] h-[9px] w-3 rounded-b-[4px] bg-[#555] leading-[8px] text-[#ccc]">+</button>
      </div>
      <div className="mt-[2px] flex bg-[#5a5a5a] text-[#e0e0e0]">
        <StatusCell label="Model space" className="w-[26px] border-r border-[#333] text-white">MODEL</StatusCell>
        <StatusCell label="Grid" className="w-[13px]"><svg viewBox="0 0 8 8" className="h-2 w-2"><path d="M0 0h8v8H0z" fill="#2a7de0" /><path d="M2.500 0v8M5.500 0v8M0 2.500h8M0 5.500h8" stroke="#5fa8f5" strokeWidth=".6" /></svg></StatusCell>
        <StatusCell label="Snap" className="w-3"><svg viewBox="0 0 8 8" className="h-2 w-2"><path d="M0 0h2v2H0zM3 0h2v2H3zM6 0h2v2H6zM0 3h2v2H0zM3 3h2v2H3zM6 3h2v2H6zM0 6h2v2H0zM3 6h2v2H3zM6 6h2v2H6z" fill="#777" /></svg></StatusCell>
        <StatusCell label="Snap options" className="w-[9px] border-r border-[#333]"><Caret /></StatusCell>
        <StatusCell label="Ortho" className="w-[13px]"><svg viewBox="0 0 8 8" className="h-2 w-2" fill="none" stroke="#c0c0c0"><path d="M1.500 0v7H8M1.500 4.500h2.500V7" /></svg></StatusCell>
        <StatusCell label="Polar tracking" className="w-[13px]"><svg viewBox="0 0 9 9" className="h-[9px] w-[9px]" fill="none" stroke="#2e8cf0" strokeWidth="1.200"><circle cx="4.500" cy="4.500" r="3.500" /><path d="M4.500 1v3.500H9" /></svg></StatusCell>
        <StatusCell label="Polar options" className="w-2"><Caret /></StatusCell>
        <StatusCell label="Isometric drafting" className="w-3"><svg viewBox="0 0 9 9" className="h-[9px] w-[9px]" fill="none" stroke="#c0c0c0"><path d="M0 0l9 9M3 0v9M9 3L6 6" /></svg></StatusCell>
        <StatusCell label="Isometric options" className="w-2"><Caret /></StatusCell>
        <StatusCell label="Object snap tracking" className="w-[14px] border-l border-[#333]"><svg viewBox="0 0 9 9" className="h-[9px] w-[9px]" fill="none" stroke="#2e8cf0" strokeWidth="1.200"><path d="M8 0L1 7.500h8M3 4l3 3" /></svg></StatusCell>
        <StatusCell label="Object snap" className="w-3"><svg viewBox="0 0 9 9" className="h-[9px] w-[9px]" fill="none" stroke="#d0d0d0"><path d="M1.500 2.500h6v6h-6z" /><path d="M0 1h3v3H0z" fill="#2db02d" stroke="none" /></svg></StatusCell>
        <StatusCell label="Object snap options" className="w-2 border-r border-[#333]"><Caret /></StatusCell>
        <StatusCell label="Annotation visibility" className="w-[14px]"><PersonIcon className="text-[#3b95f5]" /></StatusCell>
        <StatusCell label="Auto scale" className="w-3"><PersonIcon className="text-[#b8b8b8]" /></StatusCell>
        <StatusCell label="Annotation scale" className="w-3"><PersonIcon className="text-[#d8d8d8]" /></StatusCell>
        <StatusCell label="Scale 1:1" className="w-[14px] text-white">1:1</StatusCell>
        <StatusCell label="Scale list" className="w-[6px]"><Caret /></StatusCell>
        <StatusCell label="Workspace" className="w-[15px] border-l border-[#333]"><svg viewBox="0 0 10 10" className="h-[7px] w-[7px]"><circle cx="5" cy="5" r="3" fill="none" stroke="#ddd" strokeWidth="2" /><path d="M5 0v10M0 5h10M1.500 1.500l7 7M8.500 1.500l-7 7" stroke="#ddd" strokeWidth="1" /><circle cx="5" cy="5" r="1.600" fill="#5a5a5a" /></svg></StatusCell>
        <StatusCell label="Workspace list" className="w-[7px]"><Caret /></StatusCell>
        <StatusCell label="Annotation monitor" className="w-[14px] border-l border-[#333]"><svg viewBox="0 0 8 8" className="h-2 w-2"><path d="M4 0v8M0 4h8" stroke="#ddd" /></svg></StatusCell>
        <StatusCell label="Hardware acceleration" className="w-[13px] border-x border-[#333]"><svg viewBox="0 0 10 10" className="h-[10px] w-[10px] shrink-0"><circle cx="5" cy="5" r="4.500" fill="#1f7fe8" /><path d="M3 6.500L7.500 3M3 6.500L2.500 4" stroke="#0f3f85" fill="none" /></svg></StatusCell>
        <StatusCell label="Isolate objects" className="w-[13px]"><svg viewBox="0 0 9 9" className="h-2 w-2"><path d="M1 0h4v4H1z" fill="#f1c534" /><path d="M3 3h5v3H3z" fill="#e8e8e8" /><path d="M1 5h3v3H1z" fill="#3c87d6" /><circle cx="6.500" cy="6.500" r="2" fill="#8cbd3a" /></svg></StatusCell>
        <StatusCell label="Graphics performance" className="w-[14px]"><svg viewBox="0 0 9 9" className="h-[9px] w-[9px]" fill="none" stroke="#ccc"><path d="M.5 1h3v2.500h-3zM5 1h3v2.500H5zM3.500 5.500h3V8h-3zM4 3.500v2" /></svg></StatusCell>
        <StatusCell label="Clean screen" className="w-[14px] border-l border-[#333]"><svg viewBox="0 0 9 8" className="h-2 w-[9px]" fill="none" stroke="#ddd"><path d="M.5.5h8v6h-8z" /><path d="M2 5V3h2M7 2.500v2H5" /></svg></StatusCell>
        <StatusCell label="Customization" className="w-[13px]"><svg viewBox="0 0 8 8" className="h-2 w-2"><path d="M0 1.500h8M0 4.500h8M0 7.500h8" stroke="#e8e8e8" /></svg></StatusCell>
      </div>
    </footer>
  );
}

/* ---------- taskbar ---------- */

function AppWindowIcon() {
  return (
    <svg viewBox="0 0 16 13" className="h-[13px] w-4">
      <path d="M0 0h16v13H0z" fill="#e9ecef" /><path d="M1.500 3h7v8h-7z" fill="#3e8f87" /><path d="M1.500 3h7v4h-7z" fill="#4a7f9c" /><path d="M10 3h5M10 5h5M10 7h5M10 9h4" stroke="#9aa7b3" />
    </svg>
  );
}

const taskItems: { name: string; open?: boolean; icon: ReactNode }[] = [
  {
    name: 'Explorer', open: true,
    icon: <svg viewBox="0 0 18 17" className="h-[17px] w-[18px]"><path d="M1 2h6l1 2h9v11H1z" fill="#e8c768" /><path d="M4 1h5v3H4zM10 2h5v3h-5z" fill="#8fcf8a" /><path d="M1 6h16v9H1z" fill="#f7e29a" /><path d="M5 16v-5q0-1 1-1h6q1 0 1 1v5h-2v-3H7v3z" fill="#6bb5e0" /></svg>,
  },
  {
    name: 'Chrome', open: true,
    icon: <svg viewBox="0 0 16 16" className="h-4 w-4"><circle cx="8" cy="8" r="8" fill="#f2c62e" /><path d="M8 8L1.100 4A8 8 0 0 1 15 4H8z" fill="#dc4437" /><path d="M1.100 4A8 8 0 0 0 7.500 16L11.500 10 8 12 4.500 10z" fill="#1e9d58" /><circle cx="8" cy="8" r="4" fill="#fff" /><circle cx="8" cy="8" r="3" fill="#4a84e8" /></svg>,
  },
  { name: 'Window', icon: <svg viewBox="0 0 16 13" className="h-[13px] w-4"><path d="M0 0h16v13H0z" fill="#2c6cc4" /><path d="M1 3h14v9H1z" fill="#fbfbfb" /></svg> },
  { name: 'Viewer', icon: <AppWindowIcon /> },
  {
    name: 'Epic Games',
    icon: (
      <svg viewBox="0 0 14 16" className="h-4 w-[14px]" fontFamily="'Liberation Sans', sans-serif" fontWeight="bold" textAnchor="middle" fill="#eee">
        <path d="M0 1q0-1 1-1h12q1 0 1 1v11.500L7 16 0 12.500z" fill="#050505" />
        <text x="7" y="6.500" fontSize="5.500">EPIC</text>
        <text x="7" y="10.500" fontSize="3">GAMES</text>
      </svg>
    ),
  },
  { name: 'Photoshop', icon: <span className="flex h-[15px] w-[15px] items-center justify-center border border-[#9cc4ea] bg-[#0b1d52] text-[8px] font-bold text-[#d5e8fa]">Ps</span> },
  { name: 'Viewer 2', icon: <AppWindowIcon /> },
  {
    name: 'Monitor', open: true,
    icon: <svg viewBox="0 0 18 15" className="h-[15px] w-[18px]"><path d="M4 1l12-1v9L5 11z" fill="#d5dad5" /><path d="M5.500 2l9-1v7l-8.500 1.500z" fill="#0d3b1a" /><path d="M7 7l2-4 1 3 2-3 1 4" stroke="#38d64a" fill="none" /><path d="M1 5h4v5H1zM2 11h9v2H2z" fill="#aeb4ae" /></svg>,
  },
  {
    name: 'VLC', open: true,
    icon: <svg viewBox="0 0 16 16" className="h-4 w-4"><path d="M6.800 0h2.400L13 12H3z" fill="#f28a1c" /><path d="M5.900 3h4.200l.9 2.700H5zM4.200 8.300h7.600l.8 2.400H3.400z" fill="#f4f0ec" /><path d="M2 11.500h12l2 4.500H0z" fill="#e67714" /></svg>,
  },
  { name: 'AutoCAD', open: true, icon: <span className="flex h-[17px] w-4 items-center justify-center bg-gradient-to-r from-[#f3d9d9] to-white"><LogoA className="h-3 w-3" /></span> },
];

function Taskbar() {
  return (
    <nav className="flex h-[21px] shrink-0 items-center border-t border-[#59616a] bg-[linear-gradient(90deg,#1f1e20_0%,#2a2320_12%,#2b2522_34%,#1f2429_37%,#2c3d48_42%,#3a4c58_54%,#2b3b46_62%,#34444f_76%,#28343d_88%,#1c242b_100%)] text-white">
      <button aria-label="Start" className="ml-1 mr-[7px] h-5 w-5 shrink-0">
        <svg viewBox="0 0 20 20">
          <circle cx="10" cy="10" r="9.500" fill="#1f5a8c" stroke="#6f9dbf" />
          <circle cx="10" cy="7" r="6" fill="#5a9cc9" opacity=".55" />
          <path d="M5 6q2-1.500 4.500 0l-.7 3.700q-2.200-1-4.500 0z" fill="#e8622c" />
          <path d="M10.300 6.300q2.500 1 4.700 0l-.8 3.700q-2 1-4.500 0z" fill="#8cc63f" />
          <path d="M4.100 10.600q2.200-1 4.500 0L8 14q-2.200-1.200-4.500 0z" fill="#41a5e8" />
          <path d="M9.500 11q2.300 1 4.500 0l-.7 3.500q-2.300 1-4.500 0z" fill="#fbc62e" />
        </svg>
      </button>
      <div className="flex w-[321px] justify-between">
        {taskItems.map((t) => (
          <button
            key={t.name}
            aria-label={t.name}
            className={`flex h-5 w-[30px] shrink-0 items-center justify-center rounded-[1px] border ${
              t.open ? 'border-[#8a8a8a] bg-gradient-to-b from-[#777]/80 to-[#3c3c3c]/80' : 'border-transparent'
            }`}
          >
            {t.icon}
          </button>
        ))}
      </div>
      <div className="ml-auto flex h-full items-center gap-[6px]">
        <button aria-label="Show hidden icons"><Caret className="rotate-180" /></button>
        <svg viewBox="0 0 16 16" className="ml-px h-2 w-2"><path d="M2 1v14" stroke="#fff" strokeWidth="2" /><path d="M3 2h9v7H3z" fill="#eee" /><circle cx="11" cy="11" r="5" fill="#d82c2c" /><path d="M9 9l4 4M13 9l-4 4" stroke="#fff" strokeWidth="1.500" /></svg>
        <svg viewBox="0 0 16 14" className="h-[7px] w-2"><path d="M4 2h11v8H4zM8 12h5M1 4v8h4" fill="none" stroke="#fff" strokeWidth="1.800" /></svg>
        <svg viewBox="0 0 16 16" className="h-2 w-2"><path d="M1 5h3l4-4v14l-4-4H1z" fill="#fff" /><path d="M10 5q2 3 0 6M13 3q3 5 0 10" stroke="#fff" fill="none" strokeWidth="1.500" /></svg>
        <time className="mx-px flex flex-col text-center leading-[8px]">
          <span>9:16 PM</span>
          <span>04-Nov-18</span>
        </time>
        <button aria-label="Show desktop" className="h-full w-[7px] border-l border-[#5d6a74] bg-gradient-to-b from-[#5d6a74] to-[#222c34]" />
      </div>
    </nav>
  );
}

export default function App() {
  return (
    <div className="flex h-screen flex-col overflow-hidden bg-[#393939] font-['Open_Sans','Noto_Sans',sans-serif] text-[6px] leading-[8px]">
      <header className="relative shrink-0 pl-[21px]">
        <TitleBar />
        <RibbonTabs />
        <button aria-label="Application menu" className="absolute left-0 top-0 flex h-[22px] w-[22px] items-center justify-center border border-[#2b2b2b] bg-gradient-to-b from-[#9b9b9b] to-[#5c5c5c] text-[#222]">
          <LogoA className="h-[14px] w-[14px]" />
          <Caret className="w-[3px]" />
        </button>
      </header>
      <div className="flex min-h-0 flex-1">
        <div className="flex min-w-0 flex-1 flex-col">
          <Ribbon />
          <FileTabs />
          <div className="flex min-h-0 flex-1">
            <RecoveryManager />
            <Viewport />
          </div>
          <StatusBar />
        </div>
        <div className="w-1 bg-[linear-gradient(180deg,#222_0px,#222_28px,#b9b9b9_30px,#adadad_224px,#dcdcdc_230px)]" />
      </div>
      <Taskbar />
    </div>
  );
}
